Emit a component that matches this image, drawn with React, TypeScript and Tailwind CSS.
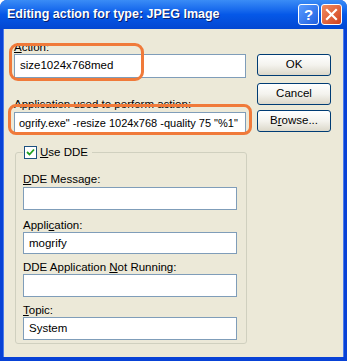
import React from "react";

const font = { fontFamily: '"Liberation Sans", Arial, sans-serif' };

function XPButton({ children }: { children: React.ReactNode }) {
  return (
    <div className="h-[22px] w-[74px] rounded-[3px] border border-[#003C74] bg-gradient-to-b from-[#FFFFFF] via-[#F4F3EE] to-[#DCD8CA] flex items-center justify-center text-[11.5px] text-black">
      {children}
    </div>
  );
}

function Field({ value, h = 23, small = false }: { value?: string; h?: number; small?: boolean }) {
  return (
    <div
      className={
        small
          ? "w-full border border-[#7F9DB9] bg-white flex items-center pl-[4px] text-[11px] text-black whitespace-nowrap overflow-hidden"
          : "w-full border border-[#7F9DB9] bg-white flex items-center pl-[5px] text-[11.5px] text-black whitespace-nowrap overflow-hidden"
      }
      style={{ height: h }}
    >
      {value}
    </div>
  );
}

export default function App() {
  return (
    <div
      className="w-[347px] h-[361px] flex flex-col bg-[#0842D6] rounded-t-[7px] overflow-hidden"
      style={font}
    >
      {/* Title bar */}
      <div className="h-[29px] shrink-0 flex items-center pl-[7px] pr-[5px] bg-gradient-to-b from-[#3A8CF6] via-[#0558E8] to-[#0347D2]">
        <div className="flex-1 text-white text-[12.5px] font-bold [text-shadow:1px_1px_0_#0A1F6E]">
          Editing action for type: JPEG Image
        </div>
        <div className="flex gap-[2px]">
          <div className="w-[21px] h-[21px] rounded-[3px] border border-white bg-gradient-to-br from-[#5A9CFF] to-[#1F5FE0] flex items-center justify-center text-white text-[15px] font-bold leading-none">
            ?
          </div>
          <div className="w-[21px] h-[21px] rounded-[3px] border border-white bg-gradient-to-br from-[#F08A5F] to-[#D2401C] flex items-center justify-center">
            <svg width="13" height="13" viewBox="0 0 13 13">
              <path d="M2 2 L11 11 M11 2 L2 11" stroke="white" strokeWidth="2.2" strokeLinecap="square" />
            </svg>
          </div>
        </div>
      </div>

      {/* Body */}
      <div className="flex-1 mx-[3px] mb-[4px] bg-[#ECE9D8] relative border-l border-r border-[#4C7BEA]">
        <div className="flex pl-[10px] pt-[11px]">
          <div className="w-[232px] flex flex-col">
            <div className="text-[11.5px] h-[14px] leading-[14px] text-black">
              <span className="underline">A</span>ction:
            </div>
            <div>
              <Field value="size1024x768med" h={24} />
            </div>
            <div className="text-[11.5px] h-[14px] leading-[14px] text-black mt-[19px]">
              Application used to perform action:
            </div>
            <div className="mt-[1px]">
              <Field value={'ogrify.exe" -resize 1024x768 -quality 75 "%1"'} h={22} small />
            </div>
          </div>
          <div className="ml-[11px] flex flex-col pt-[14px]">
            <XPButton>OK</XPButton>
            <div className="mt-[7px]">
              <XPButton>Cancel</XPButton>
            </div>
            <div className="mt-[5px]">
              <XPButton>
                <span>
                  B<span className="underline">r</span>owse...
                </span>
              </XPButton>
            </div>
          </div>
        </div>

        {/* Group box */}
        <fieldset className="ml-[11px] mt-[10px] w-[232px] h-[200px] border border-[#D0D0BF] rounded-[3px] px-[7px]">
          <legend className="px-[1px] flex items-center text-[11.5px] text-black">
            <span className="w-[13px] h-[13px] border border-[#1C5180] bg-white flex items-center justify-center mr-[3px]">
              <svg width="9" height="9" viewBox="0 0 9 9">
                <path d="M1 4 L3.5 6.5 L8 1.5" stroke="#21A121" strokeWidth="1.8" fill="none" />
              </svg>
            </span>
            <span className="pr-[3px]">
              <span className="underline">U</span>se DDE
            </span>
          </legend>
          <div className="w-[214px] flex flex-col">
            <div className="text-[11.5px] h-[14px] leading-[14px] mt-[11px]">
              <span className="underline">D</span>DE Message:
            </div>
            <div className="mt-[1px]">
              <Field h={23} />
            </div>
            <div className="text-[11.5px] h-[14px] leading-[14px] mt-[8px]">
              Appli<span className="underline">c</span>ation:
            </div>
            <div>
              <Field value="mogrify" h={22} />
            </div>
            <div className="text-[11.5px] h-[14px] leading-[14px] mt-[6px]">
              DDE Application <span className="underline">N</span>ot Running:
            </div>
            <div>
              <Field h={23} />
            </div>
            <div className="text-[11.5px] h-[14px] leading-[14px] mt-[6px]">
              <span className="underline">T</span>opic:
            </div>
            <div>
              <Field value="System" h={23} />
            </div>
          </div>
        </fieldset>

        {/* Orange annotation highlights */}
        <div className="absolute left-[5px] top-[14px] w-[135px] h-[38px] border-[3px] border-[#F07A3A] rounded-[9px]" />
        <div className="absolute left-[4px] top-[75px] w-[244px] h-[31px] border-[3px] border-[#F07A3A] rounded-[8px]" />
      </div>
    </div>
  );
}
